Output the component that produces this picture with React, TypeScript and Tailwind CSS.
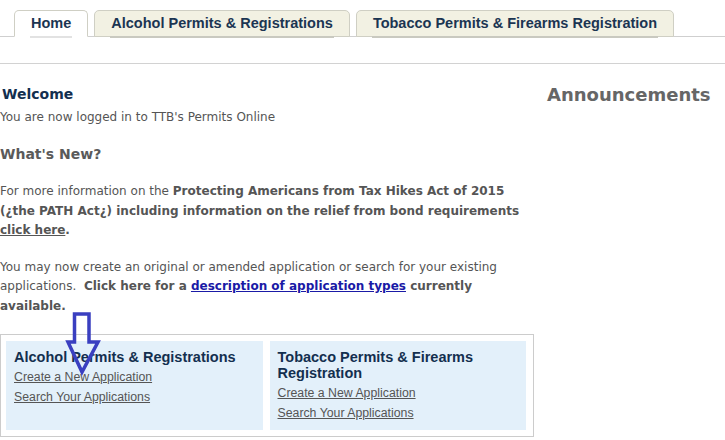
import React from "react";

const verdana = "font-['DejaVu_Sans',Verdana,sans-serif]";
const arial = "font-['Liberation_Sans',Arial,sans-serif]";

function Tab({ label, active }: { label: string; active?: boolean }) {
  return (
    <div
      className={`relative -mb-px h-[27px] pl-[16px] pr-[16px] flex items-center rounded-t-[5px] border border-[#cfcfc4] ${
        active ? "bg-white border-b-white" : "bg-[#f2f1e3]"
      }`}
    >
      <span className={`${arial} text-[14.5px] font-bold text-[#1b3552]`}>{label}</span>
      <div className={`absolute left-[15px] right-[15px] bottom-[-2px] h-[2px] ${active ? "bg-[#e2e2e2]" : "bg-[#c9c9c0]"}`} />
    </div>
  );
}

function AppBox({ title }: { title: string }) {
  return (
    <div className="flex-1 bg-[#e3f0fa] px-[8px] pt-[8px] pb-[7px]">
      <h3 className={`${arial} text-[14.5px] leading-[16px] font-bold text-[#132f4f]`}>{title}</h3>
      <div className={`${arial} text-[12.3px] leading-[20px] text-[#555] mt-[2px]`}>
        <p><a className="underline">Create a New Application</a></p>
        <p><a className="underline">Search Your Applications</a></p>
      </div>
    </div>
  );
}

export default function App() {
  return (
    <div className="w-[725px] h-[440px] bg-white overflow-hidden relative">
      <div className="pt-[10px] flex gap-[6px] pl-[14px] border-b border-[#cfcfcf]">
        <Tab label="Home" active />
        <Tab label="Alcohol Permits & Registrations" />
        <Tab label="Tobacco Permits & Firearms Registration" />
      </div>
      <div className="mt-[26px] border-t border-[#d2d2d2]" />

      <div className="flex">
        <div className={`w-[540px] ${verdana} text-[12px] text-[#555]`}>
          <h2 className="mt-[21px] pl-[2px] text-[14px] leading-[18px] font-bold text-[#132f4f]">Welcome</h2>
          <p className="mt-[6px] leading-[16px]">You are now logged in to TTB's Permits Online</p>
          <h3 className="mt-[20px] text-[14px] leading-[18px] font-bold text-[#5a5a5a]">What's New?</h3>

          <p className="mt-[19px] leading-[19.5px]">
            For more information on the <b>Protecting Americans from Tax Hikes Act of 2015 (¿the PATH Act¿) including information on the relief from bond requirements</b>{" "}
            <a className="underline font-bold">click here</a><b>.</b>
          </p>
          <p className="mt-[17px] leading-[19.5px]">
            You may now create an original or amended application or search for your existing applications.&nbsp; <b>Click here for a </b>
            <a className="underline font-bold text-[#1a1aa6]">description of application types</a>
            <b> currently available.</b>
          </p>

          <div className="relative mt-[18px] w-[534px] border border-[#cccccc] py-[6px] pl-[5px] pr-[7px] flex gap-[7px]">
            <AppBox title="Alcohol Permits & Registrations" />
            <AppBox title="Tobacco Permits & Firearms Registration" />
            <svg
              className="absolute left-[64px] top-[-23px]"
              width="36"
              height="64"
              viewBox="0 0 36 64"
              fill="none"
            >
              <path
                d="M9.5 2 H24 V30 H33 L17 60 L3 30 H9.5 Z"
                stroke="#3a3fc0"
                strokeWidth="3.5"
                strokeLinejoin="miter"
              />
            </svg>
          </div>
        </div>
        <div className="pl-[7px]">
          <h2 className={`${verdana} mt-[20px] text-[18px] leading-[22px] font-bold text-[#666]`}>Announcements</h2>
        </div>
      </div>
    </div>
  );
}
